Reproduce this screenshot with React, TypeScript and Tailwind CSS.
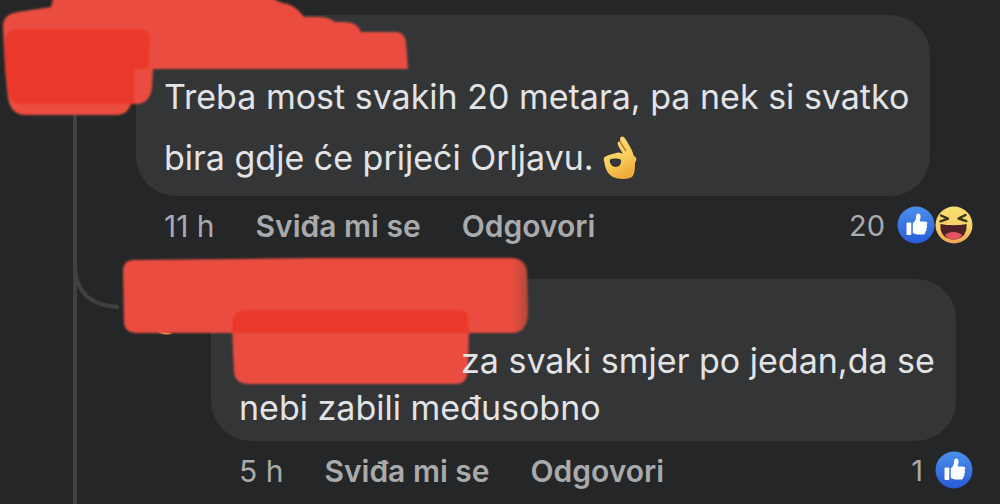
import type { ReactNode } from "react";

function LikeIcon() {
  return (
    <svg viewBox="0 0 38 38" className="size-[38px] shrink-0" role="img" aria-label="Like">
      <defs>
        <linearGradient id="like-blue" x1="0" y1="0" x2="0" y2="1">
          <stop offset="0" stopColor="#4a90ec" />
          <stop offset="1" stopColor="#2a5bd7" />
        </linearGradient>
      </defs>
      <circle cx="19" cy="19" r="18.5" fill="url(#like-blue)" />
      <rect x="9.5" y="16.5" width="4.8" height="12.5" rx="1" fill="#fff" />
      <path
        d="M15.800 17.300C18 15.900 19 13.700 19.100 10.500C19.200 8.900 19.900 7.600 21 7.600C22.800 7.600 23.800 9.200 23.500 11.600L22.800 15.500H28C29.300 15.500 30.300 16.400 30.300 17.500C30.300 18.300 29.900 18.900 29.300 19.300C30 19.700 30.300 20.300 30.200 21C30.100 21.800 29.700 22.300 29.100 22.600C29.500 23.100 29.700 23.600 29.500 24.300C29.300 25.100 28.800 25.500 28.200 25.700C28.400 26.100 28.500 26.500 28.300 27C28 27.900 27.200 28.500 26 28.500H21.600C19.100 28.500 17.400 27.900 15.800 27Z"
        fill="#fff"
      />
    </svg>
  );
}

function LaughIcon() {
  return (
    <svg viewBox="0 0 38 38" className="size-[38px] shrink-0" role="img" aria-label="Haha">
      <defs>
        <linearGradient id="laugh-face" x1="0" y1="0" x2="0" y2="1">
          <stop offset="0" stopColor="#f8df70" />
          <stop offset="0.6" stopColor="#f7cf68" />
          <stop offset="1" stopColor="#f0a253" />
        </linearGradient>
      </defs>
      <circle cx="19" cy="19" r="18.5" fill="url(#laugh-face)" />
      <path
        d="M6 9.500L13 12.700L5.500 15.300M30.500 9L23.500 12.500L31.300 15.100"
        fill="none"
        stroke="#3b3520"
        strokeWidth="2.4"
        strokeLinecap="round"
        strokeLinejoin="round"
      />
      <path d="M5.500 18C13.500 19.600 23.500 19.600 31.500 18C32.500 27 27.500 33.500 18.500 33.500S4.500 27 5.500 18Z" fill="#4c2226" />
      <path d="M9.800 29C14.300 25 22.800 25 27.200 29C25.200 32 22.200 33.500 18.500 33.500S11.800 32 9.800 29Z" fill="#e2555f" />
    </svg>
  );
}

function OkHand() {
  return (
    <svg
      viewBox="40 30 105 135"
      className="inline-block h-[45px] w-[35px] align-[-10px]"
      role="img"
      aria-label="👌"
    >
      <defs>
        <linearGradient id="hand" x1="0" y1="0" x2="0.4" y2="1">
          <stop offset="0" stopColor="#fbd985" />
          <stop offset="0.6" stopColor="#fbd05f" />
          <stop offset="1" stopColor="#f0ac3d" />
        </linearGradient>
      </defs>
      <path
        d="M91 41C94 31 103 33 108 43L122 67C128 77 130 87 133 93C143 99 141 106 136 113C136 132 135 147 127 156C113 164 85 163 70 156C57 149 46 133 44 110C41 105 41 98 46 95C56 89 68 87 80 84C87 81 96 84 100 88C98 80 84 65 84 54C85 48 89 49 92 52ZM64 102C70 100 84 99 92 103C97 108 94 118 88 123C80 128 71 127 66 121C61 115 57 105 64 102Z"
        fill="url(#hand)"
        fillRule="evenodd"
      />
      <path
        d="M92 52L108 77"
        fill="none"
        stroke="#b9702c"
        strokeWidth="4"
        strokeLinecap="round"
      />
    </svg>
  );
}

function UpperMarker() {
  return (
    <svg
      viewBox="0 0 412 120"
      className="pointer-events-none absolute left-0 top-0 h-[120px] w-[412px]"
      aria-hidden="true"
    >
      <defs>
        <filter id="soft-upper" x="-5%" y="-5%" width="110%" height="110%">
          <feGaussianBlur stdDeviation="0.9" />
        </filter>
      </defs>
      <g filter="url(#soft-upper)">
        <path
          d="M54-4L51 7L18 12Q3 14 3 26L5 69L8 98Q11 115 25 115H118Q128 114 131 104H138Q151 102 152 86L153 69H408L406 42Q404 32 396 32H361Q357 22 346 22H335Q330 18 322 17H304Q295 4 282 3L267-4Z"
          fill="#ea4e3f"
        />
        <path
          d="M16 29H140Q150 29 150 38L148 69H134V104H20Q11 104 9 94L5 66V40Q7 29 16 29Z"
          fill="#ea3829"
        />
      </g>
    </svg>
  );
}

function LowerMarker() {
  return (
    <svg
      viewBox="0 0 412 140"
      className="pointer-events-none absolute left-[120px] top-[250px] h-[140px] w-[412px]"
      aria-hidden="true"
    >
      <defs>
        <linearGradient id="marker-edge" x1="0" x2="1" y1="0" y2="0">
          <stop offset="0.96" stopColor="#ea4e3f" />
          <stop offset="1" stopColor="#b5483b" />
        </linearGradient>
        <filter id="soft-lower" x="-5%" y="-5%" width="110%" height="110%">
          <feGaussianBlur stdDeviation="0.9" />
        </filter>
      </defs>
      <path d="M36 81Q46 87 52 83Z" fill="#e5a05a" />
      <g filter="url(#soft-lower)">
        <path
          d="M13 10L200 8H392Q406 9 407 22L408 62Q408 82 393 83H16Q4 82 4 72L3 20Q4 10 13 10Z"
          fill="url(#marker-edge)"
        />
        <path d="M112 76H349L348 120Q347 134 336 134H129Q115 134 114 122Z" fill="#ea4e3f" />
        <path d="M112 83L113 67Q116 60 128 60H338Q348 60 348 68L349 83Z" fill="#ea3829" />
      </g>
    </svg>
  );
}

function CommentMeta({ age, count, children }: { age: string; count: number; children: ReactNode }) {
  return (
    <footer className="flex h-[60px] items-center pl-7 pr-[27px] text-[30px] leading-9 text-[#a9aaac]">
      <div className="flex flex-1 items-center gap-[41px] whitespace-nowrap">
        <time>{age}</time>
        <button type="button" className="font-semibold">Sviđa mi se</button>
        <button type="button" className="font-semibold">Odgovori</button>
      </div>
      <div className="flex items-center gap-3">
        <span className="text-[29px]">{count}</span>
        <div className="flex pb-0.5">{children}</div>
      </div>
    </footer>
  );
}

export default function App() {
  return (
    <main className="relative min-h-screen overflow-hidden bg-[#252628] font-['Inter',sans-serif] text-[#e2e3e5]">
      <div className="absolute bottom-0 left-[73px] top-[100px] w-1 bg-[#3f4042]" />
      <svg
        viewBox="0 0 48 44"
        className="absolute left-[73px] top-[267px] h-11 w-12"
        fill="none"
        aria-hidden="true"
      >
        <path d="M2 0C3 26 18 39 46 40" stroke="#3f4042" strokeWidth="4" />
      </svg>

      <article className="pl-[136px] pt-[15px]">
        <div className="mr-[70px] rounded-[40px] bg-[#343537] pb-2 pl-7 pr-3 pt-[51px]">
          <p className="text-[34px] leading-[61px]">
            Treba most svakih 20 metara, pa nek si svatko bira gdje će prijeći Orljavu. <OkHand />
          </p>
        </div>
        <CommentMeta age="11 h" count={20}>
          <LikeIcon />
          <LaughIcon />
        </CommentMeta>
      </article>

      <article className="mt-[23px] pl-[211px]">
        <div className="mr-11 rounded-[40px] bg-[#343537] pb-[10px] pl-7 pr-3 pt-[58px]">
          <p className="relative z-10 text-[34px] leading-[47px]">
            <span className="inline-block w-[222px]" />
            za svaki smjer po jedan,da se nebi zabili međusobno
          </p>
        </div>
        <CommentMeta age="5 h" count={1}>
          <LikeIcon />
        </CommentMeta>
      </article>

      <UpperMarker />
      <LowerMarker />
    </main>
  );
}
